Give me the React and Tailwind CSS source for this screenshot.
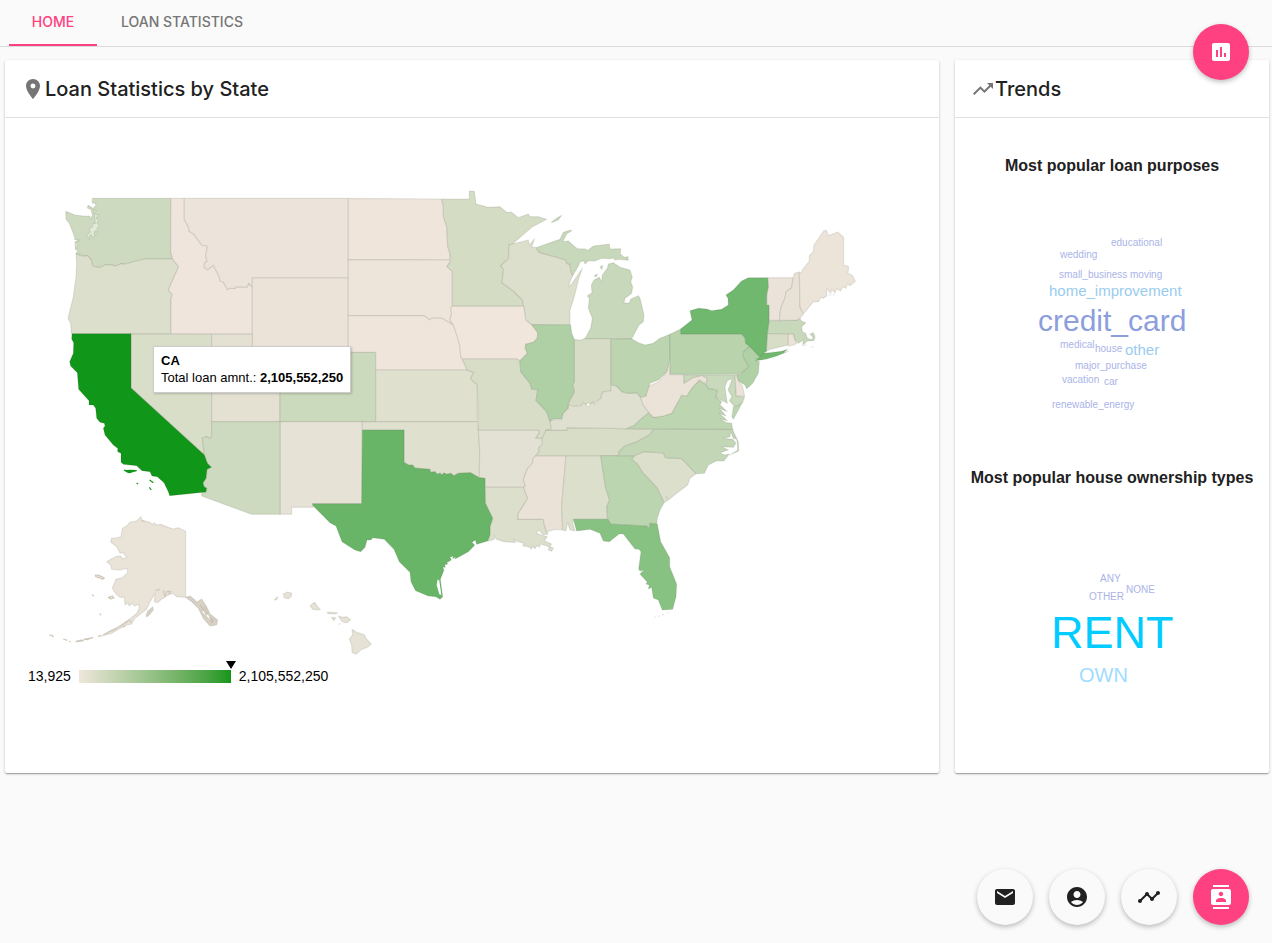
import {
  MdPlace,
  MdTrendingUp,
  MdAssessment,
  MdEmail,
  MdAccountCircle,
  MdTimeline,
  MdContacts,
} from "react-icons/md";

// Each regional tile has its own origin; outlines inside use thirds of a map unit.
const TILES = {
  west: "translate(50 180) scale(0.33333)",
  north: "translate(350 180) scale(0.33333)",
  northeast: "translate(570 190) scale(0.33333)",
  south: "translate(300 380) scale(0.33333)",
  southeast: "translate(520 370) scale(0.33333)",
  pacific: "translate(40 510) scale(0.33333)",
};

const STATES = [
  { id: "WA", tile: "west", fill: "#cddabf", d: "M127,55 L362,55 362,215 368,237 285,237 260,243 222,253 215,251 195,259 185,254 165,255 147,263 128,258 124,240 112,227 100,229 78,221 84,212 76,208 75,185 86,180 75,176 68,155 58,130 48,118 47,94 75,105 100,108 120,108 122,116 128,105 122,88 112,84 114,76 130,85 138,76 134,68 127,70Z" },
  { id: "OR", tile: "west", fill: "#dcdfcc", d: "M78,221 L100,229 112,227 124,240 128,258 147,263 165,255 185,254 195,259 215,251 222,253 260,243 285,237 368,237 386,260 355,330 368,344 363,355 363,461 64,461 62,430 54,415 60,390 70,350 78,290 80,250Z" },
  { id: "ID", tile: "west", fill: "#efe5dc", d: "M363,55 L403,55 403,118 418,148 416,153 432,163 455,195 472,198 467,230 472,243 463,250 463,262 472,269 490,256 508,290 510,303 520,306 533,330 537,325 555,325 558,320 592,321 596,309 607,322 607,461 363,461 363,355 368,344 355,330 386,260 368,237 362,215Z" },
  { id: "MT", tile: "west", fill: "#ece4da", d: "M403,55 L895,55 895,294 607,294 607,322 596,309 592,321 558,320 555,325 537,325 533,330 520,306 510,303 508,290 490,256 472,269 463,262 463,250 472,243 467,230 472,198 455,195 432,163 416,153 418,148 403,118Z" },
  { id: "WY", tile: "west", fill: "#ebe3d8", d: "M607,294 L895,294 895,517 607,517Z" },
  { id: "NV", tile: "west", fill: "#d9dec8", d: "M243,462 L485,463 485,770 480,776 470,770 457,774 460,800 463,825 243,624Z" },
  { id: "UT", tile: "west", fill: "#e4e1d3", d: "M485,463 L607,463 607,517 690,517 690,725 485,725Z" },
  { id: "CO", tile: "west", fill: "#cbd9bd", d: "M690,517 L977,517 977,725 690,725Z" },
  { id: "NM", tile: "west", fill: "#e6e2d5", d: "M690,725 L937,725 935,971 788,971 790,982 725,982 725,1003 690,1003Z" },
  { id: "AZ", tile: "west", fill: "#cddabf", d: "M485,725 L690,725 690,1003 605,1003 455,948 455,938 470,936 470,925 462,920 459,908 468,895 471,868 484,862 472,850 463,825 460,800 457,774 470,770 480,776 485,770Z" },
  { id: "ND", tile: "north", fill: "#efe5db", d: "M-5,55 L275,57 280,80 280,110 290,140 293,200 300,220 300,240 -5,239Z" },
  { id: "SD", tile: "north", fill: "#ede4da", d: "M-5,239 L300,240 301,245 291,260 307,275 307,379 302,385 305,400 300,420 310,435 275,415 245,414 240,420 222,407 -5,407Z" },
  { id: "NE", tile: "north", fill: "#efe5db", d: "M-5,407 L222,407 240,420 245,414 275,415 310,435 322,470 330,500 332,530 352,570 77,570 77,517 -5,517Z" },
  { id: "KS", tile: "north", fill: "#e0e0cf", d: "M77,570 L352,570 372,577 362,595 370,605 382,613 382,725 77,725Z" },
  { id: "MN", tile: "north", fill: "#d4dcc4", d: "M275,57 L358,57 358,33 373,34 378,72 415,82 450,80 470,97 485,97 505,113 535,102 540,110 565,110 590,118 545,142 487,192 476,196 476,235 452,258 461,268 456,308 490,333 517,360 521,379 307,379 307,275 291,260 301,245 300,220 293,200 290,140 280,110 280,80Z" },
  { id: "WI", tile: "north", fill: "#dddfcd", d: "M487,192 L535,180 538,195 554,176 545,200 558,203 568,217 648,240 650,250 660,253 663,275 668,287 662,300 655,320 665,312 680,290 697,265 685,300 678,330 670,360 660,390 660,433 545,434 527,420 523,392 521,379 517,360 490,333 456,308 461,268 452,258 476,235 476,196Z" },
  { id: "IA", tile: "north", fill: "#f0e6dc", d: "M307,379 L521,379 523,392 527,420 545,434 563,457 562,475 550,487 527,493 532,520 510,543 500,537 337,537 332,530 330,500 322,470 310,435 300,420 305,400 302,385Z" },
  { id: "MO", tile: "north", fill: "#d8ddc8", d: "M337,537 L500,537 510,543 512,575 540,610 545,627 563,630 558,662 590,695 600,725 605,730 604,748 588,752 582,775 556,775 568,758 565,751 385,751 382,613 370,605 362,595 372,577 352,570Z" },
  { id: "IN", tile: "north", fill: "#d6dcc6", d: "M673,478 L690,481 705,475 783,475 783,633 758,635 752,655 735,668 728,678 715,668 700,682 690,676 670,680 655,685 655,670 673,635 668,615 673,605Z" },
  { id: "IL", tile: "north", fill: "#aed0a4", d: "M545,434 L662,434 665,460 673,478 673,605 668,615 673,635 655,670 655,685 640,700 635,718 610,716 600,725 590,695 558,662 563,630 545,627 540,610 512,575 510,543 532,520 525,505 527,493 550,487 562,475 563,457Z" },
  { id: "MI", tile: "north", fill: "#c8d8ba", d: "M558,203 L630,178 640,157 662,150 665,152 650,162 638,185 655,183 672,198 682,206 708,207 712,212 730,198 778,192 780,207 812,206 811,222 822,232 834,230 835,241 808,238 795,240 790,234 780,236 755,235 735,243 715,242 705,252 702,243 690,245 685,258 668,287 663,275 660,253 650,250 648,240 568,217Z M604,127 L620,115 635,106 625,120 608,127Z M705,476 L722,445 727,415 715,385 718,355 712,348 726,338 724,315 732,300 748,292 755,305 757,285 772,265 775,252 790,248 810,262 840,270 847,292 842,305 848,320 845,340 825,355 822,368 838,370 842,358 865,347 870,355 882,405 880,425 867,435 845,476Z M732,288 L742,282 740,290Z M750,262 L758,256 756,268Z" },
  { id: "OK", tile: "south", fill: "#e0e0cf", d: "M187,125 L532,125 535,151 539,210 538,293 512,278 475,280 462,287 452,280 440,283 412,283 405,275 392,277 390,268 345,264 337,255 325,255 312,247 312,150 187,150Z" },
  { id: "AR", tile: "south", fill: "#e3e1d3", d: "M535,151 L715,151 718,158 706,175 732,175 725,192 715,205 718,215 708,227 700,235 697,250 683,265 675,285 670,300 676,318 672,322 557,322 556,296 538,293 539,210Z" },
  { id: "LA", tile: "south", fill: "#dddfcd", d: "M557,322 L672,322 677,340 683,355 668,380 655,400 653,418 730,418 733,435 740,456 745,462 728,465 718,450 708,458 722,465 742,470 733,482 755,492 750,500 760,504 755,514 745,510 748,502 740,498 722,492 718,502 712,496 705,506 698,498 695,507 685,500 668,498 672,490 655,485 640,478 648,487 636,487 612,485 590,478 582,466 584,476 578,480 563,483 570,465 570,440 578,415 556,370Z" },
  { id: "MS", tile: "south", fill: "#eae2d7", d: "M708,227 L798,227 785,380 788,450 765,448 740,456 733,435 730,418 653,418 655,400 668,380 683,355 677,340 672,322 676,318 670,300 675,285 683,265 697,250 700,235Z" },
  { id: "TX", tile: "south", fill: "#69b567", d: "M187,150 L312,150 312,247 325,255 337,255 345,264 390,268 392,277 405,275 412,283 420,279 426,285 432,278 440,283 452,280 462,287 475,280 512,278 538,293 555,295 556,370 578,415 570,440 570,465 563,483 530,493 526,480 516,487 524,496 505,515 465,537 467,531 458,536 460,528 450,532 454,540 440,548 444,552 434,554 436,562 428,562 432,570 421,598 428,650 420,658 408,650 385,648 347,632 333,605 330,577 298,545 282,508 253,478 218,473 213,480 201,480 195,502 182,515 165,510 126,485 108,438 90,428 38,376 38,371 185,371Z" },
  { id: "AL", tile: "southeast", fill: "#dcdfcc", d: "M138,257 L242,257 257,355 269,390 260,410 263,448 160,448 158,460 165,483 150,480 143,458 138,483 128,480 125,410Z" },
  { id: "TN", tile: "southeast", fill: "#d7ddc7", d: "M78,181 L140,181 140,173 320,176 402,178 388,195 345,218 315,228 297,245 295,257 48,257 58,245 55,235 68,222 65,210 72,192Z" },
  { id: "KY", tile: "southeast", fill: "#e0e0d0", d: "M90,155 L100,148 125,150 130,130 145,115 145,105 160,108 180,110 190,98 205,110 218,95 225,104 242,85 248,66 273,63 275,45 290,48 305,65 325,70 350,70 362,80 370,105 387,128 360,150 345,165 320,176 140,173 140,181 78,181 95,177Z" },
  { id: "SC", tile: "southeast", fill: "#dddfcd", d: "M343,257 L370,245 430,249 437,263 485,266 528,311 510,325 503,345 470,370 445,390 432,398 410,352 368,308 352,282 335,268Z M436,377 L445,390" },
  { id: "GA", tile: "southeast", fill: "#bcd5b1", d: "M242,257 L343,257 335,268 352,282 368,308 410,352 432,398 420,420 412,445 410,462 390,460 387,478 380,468 272,462 263,448 260,410 269,390 257,355Z" },
  { id: "NC", tile: "southeast", fill: "#c3d7b6", d: "M402,178 L638,178 648,207 640,205 632,185 630,200 610,205 638,208 648,220 640,232 605,230 625,240 600,248 612,255 628,252 612,273 590,272 565,285 553,310 528,311 485,266 437,263 430,249 370,245 343,257 295,257 297,245 315,228 345,218 388,195Z M638,180 L655,215 656,243 630,255 653,241 652,215Z" },
  { id: "VA", tile: "southeast", fill: "#bed5b2", d: "M320,176 L345,165 360,150 387,128 400,142 430,138 455,130 485,75 500,78 515,55 538,30 560,45 565,55 592,60 587,82 605,95 600,105 622,125 598,115 618,138 598,130 622,152 600,147 620,158 635,160 638,178Z M640,110 L668,95 655,120 640,148 636,140Z" },
  { id: "WV", tile: "southeast", fill: "#ebe3d8", d: "M447,-35 L450,14 492,14 492,40 520,22 545,16 562,25 558,42 538,30 515,55 500,78 485,75 455,130 430,138 400,142 387,128 370,105 362,85 378,78 382,50 415,35 430,20 442,0Z" },
  { id: "MD", tile: "southeast", fill: "#c9d9bc", d: "M492,14 L645,15 649,78 674,80 668,97 652,108 640,106 628,92 636,80 624,60 632,40 636,25 622,32 615,50 618,75 622,100 608,92 587,82 592,60 565,55 558,42 562,25 545,16 520,22 492,40Z" },
  { id: "DE", tile: "southeast", fill: "#ebe3d8", d: "M645,15 L655,10 655,30 668,50 674,78 649,78Z" },
  { id: "FL", tile: "southeast", fill: "#88c283", d: "M160,448 L263,448 272,462 380,468 387,478 390,460 412,462 422,515 449,563 449,590 470,643 468,680 458,718 427,720 415,690 400,684 395,652 385,657 388,645 378,642 382,636 360,612 372,600 360,603 356,597 363,545 357,538 345,537 310,492 297,492 268,515 250,513 240,490 210,478 170,483Z M403,743 L408,741 M414,739 L420,738 M426,736 L432,733 M440,730 L445,727" },
  { id: "OH", tile: "northeast", fill: "#bcd4b0", d: "M123,448 L185,446 205,458 225,465 250,460 270,445 300,433 300,505 297,520 290,545 265,570 240,580 232,605 228,618 212,622 200,608 175,610 155,605 140,588 123,585Z" },
  { id: "PA", tile: "northeast", fill: "#b9d3ad", d: "M300,433 L332,417 332,432 515,432 525,443 527,460 540,470 520,485 520,500 537,530 520,545 495,553 300,553Z" },
  { id: "NJ", tile: "northeast", fill: "#b0d0a6", d: "M540,470 L568,487 563,505 557,512 568,515 565,550 548,580 530,596 525,585 505,572 500,556 520,545 537,530 520,500 520,485Z" },
  { id: "CT", tile: "northeast", fill: "#d8ddc8", d: "M592,430 L655,431 655,465 625,472 600,478 585,487 589,480Z" },
  { id: "RI", tile: "northeast", fill: "#ebe3d8", d: "M655,431 L670,432 675,450 680,460 672,465 655,468Z" },
  { id: "MA", tile: "northeast", fill: "#c8d8ba", d: "M597,392 L680,391 690,386 695,394 707,398 695,410 697,425 707,430 712,445 725,449 730,443 720,432 730,428 735,440 732,452 712,453 698,465 700,450 685,460 675,450 670,432 592,430Z M697,467 L710,465 M722,471 L732,470" },
  { id: "VT", tile: "northeast", fill: "#ebe3d9", d: "M593,263 L670,263 665,293 648,305 645,325 632,355 628,391 597,391 597,346 590,345 590,315 595,290Z" },
  { id: "NH", tile: "northeast", fill: "#e7e2d5", d: "M670,263 L673,250 688,246 690,350 700,372 690,385 680,391 628,391 632,355 645,325 648,305 665,293Z" },
  { id: "ME", tile: "northeast", fill: "#ece4d9", d: "M688,246 L694,250 697,240 718,213 718,197 730,185 732,165 762,122 770,122 775,137 803,126 821,142 821,225 836,230 834,250 848,257 856,274 840,287 832,282 828,295 818,290 812,303 800,296 795,308 785,298 782,310 770,295 770,318 760,325 752,322 745,335 730,335 718,350 700,372 690,350Z M776,316 L784,314 M790,318 L793,310" },
  { id: "NY", tile: "northeast", fill: "#70b86e", d: "M332,417 L366,390 360,362 385,355 410,357 425,362 455,358 475,345 474,325 468,315 490,300 515,273 535,263 593,263 595,290 590,315 590,345 597,346 597,395 592,430 589,483 568,500 540,470 527,460 525,443 515,432 332,432Z M566,502 L580,490 600,488 635,484 653,478 640,488 655,484 620,498 590,507 558,512Z" },
  { id: "CA", tile: "west", fill: "#109618", d: "M66,461 L243,461 243,624 463,825 472,850 484,862 471,868 468,895 459,908 462,920 470,925 468,936 359,947 355,935 342,908 322,890 306,888 300,875 276,872 260,857 220,853 213,847 213,820 203,815 203,805 190,795 165,765 160,745 165,738 163,730 150,727 140,715 137,685 130,675 117,675 117,662 86,628 82,578 62,558 59,545 70,520 71,488 65,477Z" },
  { id: "CA-islands", tile: "west", fill: "#109618", outline: "#109618", d: "M223,871 L232,872 240,871 259,872 250,874 238,878 230,875Z M260,909 L264,912 M299,900 L304,904 310,908 M298,922 L304,930" },
  { id: "AK", tile: "pacific", fill: "#eae3d8", d: "M437,64 L415,53 400,57 385,52 362,43 350,45 342,38 338,44 330,37 305,30 303,20 290,33 270,36 260,48 247,55 243,80 228,84 215,84 212,96 230,110 240,130 250,128 260,142 248,147 242,138 232,138 212,148 200,155 212,165 215,178 240,180 262,175 263,188 247,203 228,208 217,235 228,252 240,262 253,262 255,285 263,279 268,288 275,280 285,288 297,282 297,298 290,310 265,330 235,350 210,362 185,378 215,370 235,358 260,345 273,343 285,325 320,297 328,280 345,250 343,275 352,278 365,268 385,255 398,250 410,260 437,262Z" },
  { id: "AK-panhandle", tile: "pacific", fill: "#d8d1c4", d: "M437,262 L450,258 465,270 470,277 485,267 500,290 510,312 533,330 530,345 510,348 490,325 475,295 455,275Z M480,285 L490,300 485,305 500,322 M492,290 L503,312 498,318 515,335 M508,322 L520,330 514,340 M318,320 L322,305 338,290 340,300 325,318Z" },
  { id: "AK-islands", tile: "pacific", fill: "#eae3d8", outline: "#cfc8ba", d: "M166,195 L180,197 193,204 188,208 178,203 168,201Z M156,253 L162,259 M205,262 L218,258 222,264 212,267Z M179,310 L183,316 M28,375 L38,377 40,382 M70,387 L82,391 M88,393 L92,396 M108,394 L125,390 130,392 112,395Z M132,388 L148,385 158,383 140,389Z M174,379 L184,376 M190,374 L215,362 M346,242 L360,238 M370,240 L374,260 380,245 392,244 386,253 M255,338 L268,330 275,340 M248,352 L256,348 M215,364 L232,354 M235,352 L262,336 M304,30 L314,36" },
  { id: "HI", tile: "pacific", fill: "#e6e2d5", d: "M730,252 L742,246 755,249 754,259 745,266 733,264Z M703,269 L713,260 712,267 705,271Z M810,287 L824,277 832,289 841,299 830,300 818,298Z M862,306 L892,308 888,312 864,311Z M874,322 L887,323 882,332Z M895,318 L908,322 920,320 932,329 920,338 907,336Z M894,343 L902,341 M936,358 L950,367 972,374 982,390 994,402 982,412 965,418 948,433 936,427 935,405 928,387 938,374Z" },
];

const INLETS =
  "M131,88 l8,4 -5,9 11,5 -7,9 9,5 -6,9 7,8 -7,7 1,13 -7,-5 -3,11 7,3 -12,6 -4,-9 -7,9 3,7 -9,-7 5,-12 6,-3 -3,-13 9,-3 3,-12 6,2 z M72,178 l16,2 -6,4 8,0 M76,186 l8,8 -4,12 M78,222 l12,3";

const LAGOON = "M413,598 L410,615 418,643 424,645 418,602Z";

const PURPOSES = [
  ["educational", 1111, 246, 10, "#aab4e8"],
  ["wedding", 1060, 258, 10, "#aab4e8"],
  ["small_business", 1059, 278, 10, "#aab4e8"],
  ["moving", 1130, 278, 10, "#aab4e8"],
  ["home_improvement", 1049, 296, 15, "#99ccee"],
  ["credit_card", 1038, 331, 30, "#8c9edc"],
  ["medical", 1060, 348, 10, "#aab4e8"],
  ["house", 1095, 352, 10, "#aab4e8"],
  ["other", 1125, 355, 15, "#99ccee"],
  ["major_purchase", 1075, 369, 10, "#aab4e8"],
  ["vacation", 1062, 383, 10, "#aab4e8"],
  ["car", 1104, 385, 10, "#aab4e8"],
  ["renewable_energy", 1052, 408, 10, "#aab4e8"],
];

const OWNERSHIP = [
  ["ANY", 1100, 582, 10, "#aab4e8"],
  ["NONE", 1126, 593, 10, "#aab4e8"],
  ["OTHER", 1089, 600, 10, "#aab4e8"],
  ["RENT", 1051, 648, 45, "#00ccff"],
  ["OWN", 1079, 682, 20, "#a0dcff"],
];

function WordCloud({ words, viewBox, label }) {
  return (
    <svg viewBox={viewBox} className="block w-full" role="img" aria-label={label}>
      {words.map(([word, x, y, size, color]) => (
        <text key={word} x={x} y={y} fontSize={size} fill={color}>
          {word}
        </text>
      ))}
    </svg>
  );
}

function StateMap() {
  return (
    <svg viewBox="5 118 934 545" className="block w-full" role="img" aria-label="Total loan amount by state">
      {STATES.map((s) => (
        <path
          key={s.id}
          d={s.d}
          transform={TILES[s.tile]}
          fill={s.fill}
          stroke={s.outline ?? "#3a3420"}
          strokeOpacity={s.outline ? 1 : 0.11}
          strokeWidth="3.5"
          strokeLinejoin="round"
        />
      ))}
      <path d={INLETS} transform={TILES.west} fill="#ffffff" fillOpacity="0.4" stroke="#b4c4a8" strokeWidth="2" />
      <path d={LAGOON} transform={TILES.south} fill="#ffffff" />
    </svg>
  );
}

function Card({ icon: Icon, title, children }) {
  return (
    <section className="rounded-[2px] bg-white shadow-[0_1px_3px_rgba(0,0,0,0.2),0_1px_1px_rgba(0,0,0,0.14),0_2px_1px_-1px_rgba(0,0,0,0.12)]">
      <header className="flex h-[58px] items-center border-b border-[#e0e0e0] px-4">
        <Icon className="size-6 shrink-0 text-[#757575]" aria-hidden="true" />
        <h2 className="font-[Inter,'Liberation_Sans',sans-serif] text-xl font-medium whitespace-nowrap">{title}</h2>
      </header>
      {children}
    </section>
  );
}

function Fab({ icon: Icon, label, tone }) {
  return (
    <button
      type="button"
      aria-label={label}
      className={`flex size-14 items-center justify-center rounded-full shadow-[0_2px_5px_rgba(0,0,0,0.26)] ${tone}`}
    >
      <Icon className="size-6" aria-hidden="true" />
    </button>
  );
}

const ACCENT = "bg-[#ff4081] text-white";
const PLAIN = "bg-[#fafafa] text-[#212121]";

export default function App() {
  return (
    <div className="relative min-h-screen bg-[#fafafa] font-['Liberation_Sans',Arial,sans-serif] text-[#212121]">
      <nav className="flex h-[47px] border-b border-[#dcdcdc] pl-[9px] font-[Inter,'Liberation_Sans',sans-serif] text-sm font-medium">
        <a href="#home" aria-current="page" className="flex w-[88px] items-center justify-center border-b-2 border-[#ff4081] text-[#ff4081]">
          HOME
        </a>
        <a href="#loan-statistics" className="flex items-center border-b-2 border-transparent px-6 text-[#757575]">
          LOAN STATISTICS
        </a>
      </nav>

      <main className="grid grid-cols-[minmax(0,1fr)_314px] gap-4 pt-[13px] pr-[3px] pl-[5px]">
        <Card icon={MdPlace} title="Loan Statistics by State">
          <div className="relative pb-[84px] text-black">
            <StateMap />
            <div className="flex h-[26px] items-center gap-2 pl-[23px] text-sm">
              <span>13,925</span>
              <div className="relative h-[13px] w-[152px] bg-linear-to-r from-[#efe6dc] to-[#109618]">
                <svg viewBox="0 0 10 8" className="absolute -top-[9px] -right-[5px] h-2 w-[10px]" aria-hidden="true">
                  <path d="M0,0 H10 L5,8Z" />
                </svg>
              </div>
              <span>2,105,552,250</span>
            </div>
            <div className="absolute top-[228px] left-[148px] border border-[#cccccc] bg-white px-[7px] pt-[5px] pb-[6px] text-[13px] leading-[17px] whitespace-nowrap shadow-[1px_1px_2px_rgba(0,0,0,0.2)]">
              <p className="font-bold">CA</p>
              <p>
                Total loan amnt.: <b>2,105,552,250</b>
              </p>
            </div>
          </div>
        </Card>

        <Card icon={MdTrendingUp} title="Trends">
          <div className="pt-9 text-center">
            <h3 className="leading-6 font-bold">Most popular loan purposes</h3>
            <WordCloud words={PURPOSES} viewBox="955 178 314 288" label="Loan purposes" />
            <h3 className="leading-6 font-bold whitespace-nowrap">Most popular house ownership types</h3>
            <WordCloud words={OWNERSHIP} viewBox="955 490 314 283" label="House ownership types" />
          </div>
        </Card>
      </main>

      <div className="absolute top-6 right-[23px]">
        <Fab icon={MdAssessment} label="Statistics" tone={ACCENT} />
      </div>
      <div className="fixed right-[23px] bottom-[18px] flex gap-4">
        <Fab icon={MdEmail} label="Email" tone={PLAIN} />
        <Fab icon={MdAccountCircle} label="Profile" tone={PLAIN} />
        <Fab icon={MdTimeline} label="Timeline" tone={PLAIN} />
        <Fab icon={MdContacts} label="Contacts" tone={ACCENT} />
      </div>
    </div>
  );
}
